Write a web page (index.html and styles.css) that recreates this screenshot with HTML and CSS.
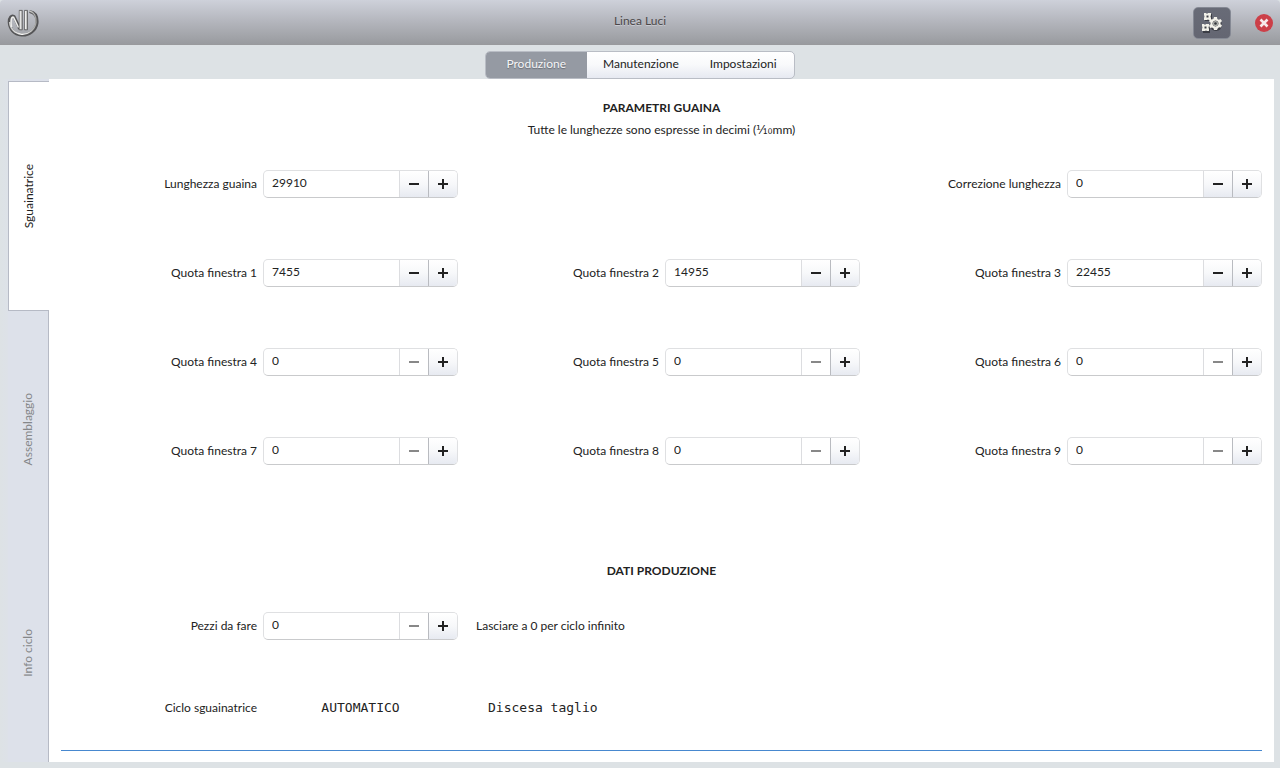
FILE: index.html
```html
<!DOCTYPE html>
<html lang="it">
<head>
<meta charset="utf-8">
<title>Linea Luci</title>
<link rel="stylesheet" href="styles.css">
</head>
<body>
<header class="titlebar">
  <svg class="logo" viewBox="0 0 32 32" role="img" aria-label="Logo">
    <defs>
      <linearGradient id="metal" x1="0" y1="0" x2="1" y2="0">
        <stop offset="0" stop-color="#c9c9c8"/><stop offset=".5" stop-color="#fbfbfa"/><stop offset="1" stop-color="#a2a2a0"/>
      </linearGradient>
    </defs>
    <g fill="none" stroke-linejoin="round">
      <path d="M22.500 4.500C28 5.500 30.500 10 30 16C29 23.500 22 28.500 14.500 28C7 27.500 2.500 22 2.200 15C2.200 10.500 4.500 7.800 7 9.500L11.500 19L12.500 22" stroke="#555557" stroke-width="3"/>
      <path d="M22.500 4C27 5 29.500 9.500 29 15.500C28 22.500 21.500 27.800 14.500 27.200C7.500 26.700 3 21.500 2.600 15" stroke="url(#metal)" stroke-width="1.400"/>
      <path d="M4.500 20C3.500 14 4 9.500 6.500 10.200L11.500 20.500" stroke="#efefed" stroke-width="1.500"/>
    </g>
    <g stroke="#555557" stroke-width=".8">
      <path d="M12.300 3.400h3v19.400h-3z" fill="#c3c3c2"/><path d="M17.500 3.400h3v19.400h-3z" fill="#c3c3c2"/>
    </g>
    <path d="M13.200 4v18M18.400 4v18" stroke="#f4f4f2"/>
  </svg>
  <h1 class="title">Linea Luci</h1>
  <div class="window-actions">
    <button class="gear-button" aria-label="Automazione">
      <svg class="gear-icon" viewBox="0 0 20 20">
        <g fill="#26282d" opacity=".65"><path d="M3 1h7v7H3zM1 12h7v8H1z"/><circle cx="14" cy="12" r="6"/></g>
        <g fill="#f2f1ea" fill-rule="evenodd">
          <path d="M2 0h2l1 1 1-1h3v2L8.500 3.500 9 5v2H7L6 6.500 5 7H2V5l.5-1.500L2 2zM4.500 2.500v2h2v-2z"/>
          <path d="M0 11h2l1 1 1-1h3v2l-.5 1.500L7 16v2H5l-1-.5-1 .5H0v-2l.5-1.500L0 13zM2.500 13.500v2h2v-2z"/>
          <path d="M12 4h3l.3 2 1.600.8L18.500 6l1.500 2-1.500 1.500v1.700L20 12l-1 2.500-2-.2-1.300 1.200L15 17h-3l-.5-1.700-1.500-.8-2 .5-1-2.500 1.500-1.300V9.500L7 8.300 8 6l2 .4 1.500-.7zM13.500 7.500a3 3 0 1 0 .01 0z"/>
        </g>
        <circle cx="13.500" cy="10.500" r="2.600" fill="#aeb0ac"/><circle cx="13.500" cy="10.500" r="1.300" fill="#34363c"/>
      </svg>
    </button>
    <button class="close-button" aria-label="Chiudi">
      <svg class="close-icon" viewBox="0 0 18 18"><circle cx="9" cy="9" r="9" fill="#cc3f48"/><path d="M5.500 5.500l7 7M12.500 5.500l-7 7" stroke="#f7e9ea" stroke-width="2.600"/></svg>
    </button>
  </div>
</header>

<nav class="switcher-bar" aria-label="Pagine">
  <div class="switcher">
    <button class="switch switch-active">Produzione</button>
    <button class="switch">Manutenzione</button>
    <button class="switch">Impostazioni</button>
  </div>
</nav>

<div class="workspace">
  <nav class="side-tabs" aria-label="Sezioni">
    <button class="side-tab side-tab-active"><span class="side-label">Sguainatrice</span></button>
    <button class="side-tab"><span class="side-label">Assemblaggio</span></button>
    <button class="side-tab side-tab-last"><span class="side-label">Info ciclo</span></button>
  </nav>
  <main class="panel">
    <h2 class="heading">PARAMETRI GUAINA</h2>
    <p class="subtitle">Tutte le lunghezze sono espresse in decimi (⅒mm)</p>
    <div class="params">
      <div class="field"><label for="lg">Lunghezza guaina</label><div class="spin"><input id="lg" class="value" value="29910"><button class="step minus" aria-label="Diminuisci"></button><button class="step plus" aria-label="Aumenta"></button></div></div>
      <div class="field field-last"><label for="cl">Correzione lunghezza</label><div class="spin"><input id="cl" class="value" value="0"><button class="step minus" aria-label="Diminuisci"></button><button class="step plus" aria-label="Aumenta"></button></div></div>
      <div class="field"><label for="q1">Quota finestra 1</label><div class="spin"><input id="q1" class="value" value="7455"><button class="step minus" aria-label="Diminuisci"></button><button class="step plus" aria-label="Aumenta"></button></div></div>
      <div class="field"><label for="q2">Quota finestra 2</label><div class="spin"><input id="q2" class="value" value="14955"><button class="step minus" aria-label="Diminuisci"></button><button class="step plus" aria-label="Aumenta"></button></div></div>
      <div class="field"><label for="q3">Quota finestra 3</label><div class="spin"><input id="q3" class="value" value="22455"><button class="step minus" aria-label="Diminuisci"></button><button class="step plus" aria-label="Aumenta"></button></div></div>
      <div class="field"><label for="q4">Quota finestra 4</label><div class="spin"><input id="q4" class="value" value="0"><button class="step minus" disabled aria-label="Diminuisci"></button><button class="step plus" aria-label="Aumenta"></button></div></div>
      <div class="field"><label for="q5">Quota finestra 5</label><div class="spin"><input id="q5" class="value" value="0"><button class="step minus" disabled aria-label="Diminuisci"></button><button class="step plus" aria-label="Aumenta"></button></div></div>
      <div class="field"><label for="q6">Quota finestra 6</label><div class="spin"><input id="q6" class="value" value="0"><button class="step minus" disabled aria-label="Diminuisci"></button><button class="step plus" aria-label="Aumenta"></button></div></div>
      <div class="field"><label for="q7">Quota finestra 7</label><div class="spin"><input id="q7" class="value" value="0"><button class="step minus" disabled aria-label="Diminuisci"></button><button class="step plus" aria-label="Aumenta"></button></div></div>
      <div class="field"><label for="q8">Quota finestra 8</label><div class="spin"><input id="q8" class="value" value="0"><button class="step minus" disabled aria-label="Diminuisci"></button><button class="step plus" aria-label="Aumenta"></button></div></div>
      <div class="field"><label for="q9">Quota finestra 9</label><div class="spin"><input id="q9" class="value" value="0"><button class="step minus" disabled aria-label="Diminuisci"></button><button class="step plus" aria-label="Aumenta"></button></div></div>
    </div>
    <h2 class="heading heading-data">DATI PRODUZIONE</h2>
    <div class="row pieces">
      <div class="field"><label for="pz">Pezzi da fare</label><div class="spin"><input id="pz" class="value" value="0"><button class="step minus" disabled aria-label="Diminuisci"></button><button class="step plus" aria-label="Aumenta"></button></div></div>
      <p class="hint">Lasciare a 0 per ciclo infinito</p>
    </div>
    <div class="row cycle">
      <div class="field"><span>Ciclo sguainatrice</span><output class="mono mode">AUTOMATICO</output></div>
      <output class="mono phase">Discesa taglio</output>
    </div>
    <hr class="rule">
  </main>
</div>
</body>
</html>
```
FILE: styles.css
```css
* { box-sizing: border-box; }
body {
  margin: 0;
  min-height: 100vh;
  display: flex;
  flex-direction: column;
  background: #dde2e5;
  color: #222;
  font: 12px/16px Lato, "DejaVu Sans", sans-serif;
}
button, input { font: inherit; color: inherit; margin: 0; padding: 0; border: 0; }
h1, h2, p { margin: 0; font-size: inherit; font-weight: normal; }

.titlebar {
  display: grid;
  grid-template-columns: 1fr auto 1fr;
  align-items: center;
  height: 45px;
  padding: 2px 7px 0;
  background: linear-gradient(#ced1da, #b3b5bc 50%, #999b9f);
  border-bottom: 1px solid #999a9d;
  border-radius: 4px 4px 0 0;
}
.logo { width: 32px; height: 32px; }
.title { color: #4b4749; text-shadow: 0 1px #c9cbd2; padding-bottom: 4px; }
.window-actions { display: flex; justify-content: flex-end; align-items: center; gap: 24px; }
.gear-button {
  display: grid;
  place-items: center;
  width: 38px;
  height: 32px;
  background: linear-gradient(#686b77, #646672);
  border: 1px solid #858994;
  border-radius: 5px;
}
.gear-icon { width: 20px; height: 20px; }
.close-button { display: grid; background: none; }
.close-icon { width: 18px; height: 18px; }

.switcher-bar { display: flex; justify-content: center; padding-top: 6px; }
.switcher {
  display: flex;
  height: 28px;
  border: 1px solid #b9bdc5;
  border-radius: 5px;
  background: linear-gradient(#fff, #f8f9fb 50%, #e6e9f1);
  overflow: hidden;
}
.switch { padding: 0 16px 2px; background: none; }
.switch + .switch + .switch { padding-left: 15px; padding-right: 17px; }
.switch-active { padding: 0 21px 2px 20px; background: #959aa3; color: #f5f5f7; text-shadow: 0 1px 1px #666a72; }

.workspace { flex: 1; display: flex; padding: 0 6px 6px 0; }
.side-tabs {
  display: flex;
  flex-direction: column;
  width: 49px;
  padding: 2px 0 0 8px;
  background: linear-gradient(90deg, #dde2e5, #dde1ea 14px);
}
.side-tab {
  flex: 1 1 auto;
  display: flex;
  align-items: center;
  justify-content: center;
  background: #dde1ea;
  border-right: 1px solid #b6bac5;
  color: #858789;
}
.side-tab-active {
  background: #fff;
  border: 1px solid #b6bac5;
  border-right: 0;
  color: #222;
}
.side-tab-last { padding-bottom: 4px; }
.side-label { writing-mode: vertical-rl; transform: rotate(180deg); }

.panel {
  flex: 1;
  display: flex;
  flex-direction: column;
  padding: 21px 12px 11px;
  background: #fff;
}
.heading { font-weight: bold; text-align: center; }
.subtitle { margin-top: 6px; text-align: center; }
.params {
  flex: 1;
  display: grid;
  grid-template-columns: repeat(3, 1fr);
  grid-auto-rows: 1fr;
  column-gap: 5px;
  margin-top: 1px;
}
.field { display: flex; align-items: center; justify-content: flex-end; gap: 6px; }
.field-last { grid-column: 3; }
.spin {
  display: flex;
  width: 195px;
  height: 28px;
  border: 1px solid #dfe0e2;
  border-bottom-color: #c9cacc;
  border-radius: 5px;
  background: #fff;
  overflow: hidden;
}
.value { flex: 1; min-width: 0; padding: 0 8px 2px; background: none; }
.step {
  width: 29px;
  border-left: 1px solid #dcdde0;
  background:
    linear-gradient(#222, #222) center / 10px 2px no-repeat,
    linear-gradient(#fff, #f7f8fa 50%, #e7eaf1);
}
.plus {
  border-left-color: #b9bbc0;
  background:
    linear-gradient(#222, #222) center / 10px 2px no-repeat,
    linear-gradient(#222, #222) center / 2px 10px no-repeat,
    linear-gradient(#fff, #f7f8fa 50%, #e7eaf1);
}
.step:disabled { background: linear-gradient(#888, #888) center / 10px 2px no-repeat; }

.heading-data { margin-top: 67px; }
.row { display: grid; grid-template-columns: repeat(3, 1fr); column-gap: 5px; align-items: center; }
.pieces { margin-top: 33px; }
.hint { padding-left: 13px; }
.cycle { margin-top: 60px; }
.mono { font: 13px/16px "DejaVu Sans Mono", monospace; }
.mode { width: 195px; text-align: center; }
.phase { padding-left: 25px; }
.rule { width: 100%; height: 1px; margin: 34px 0 0; border: 0; background: #4788cf; }
```
